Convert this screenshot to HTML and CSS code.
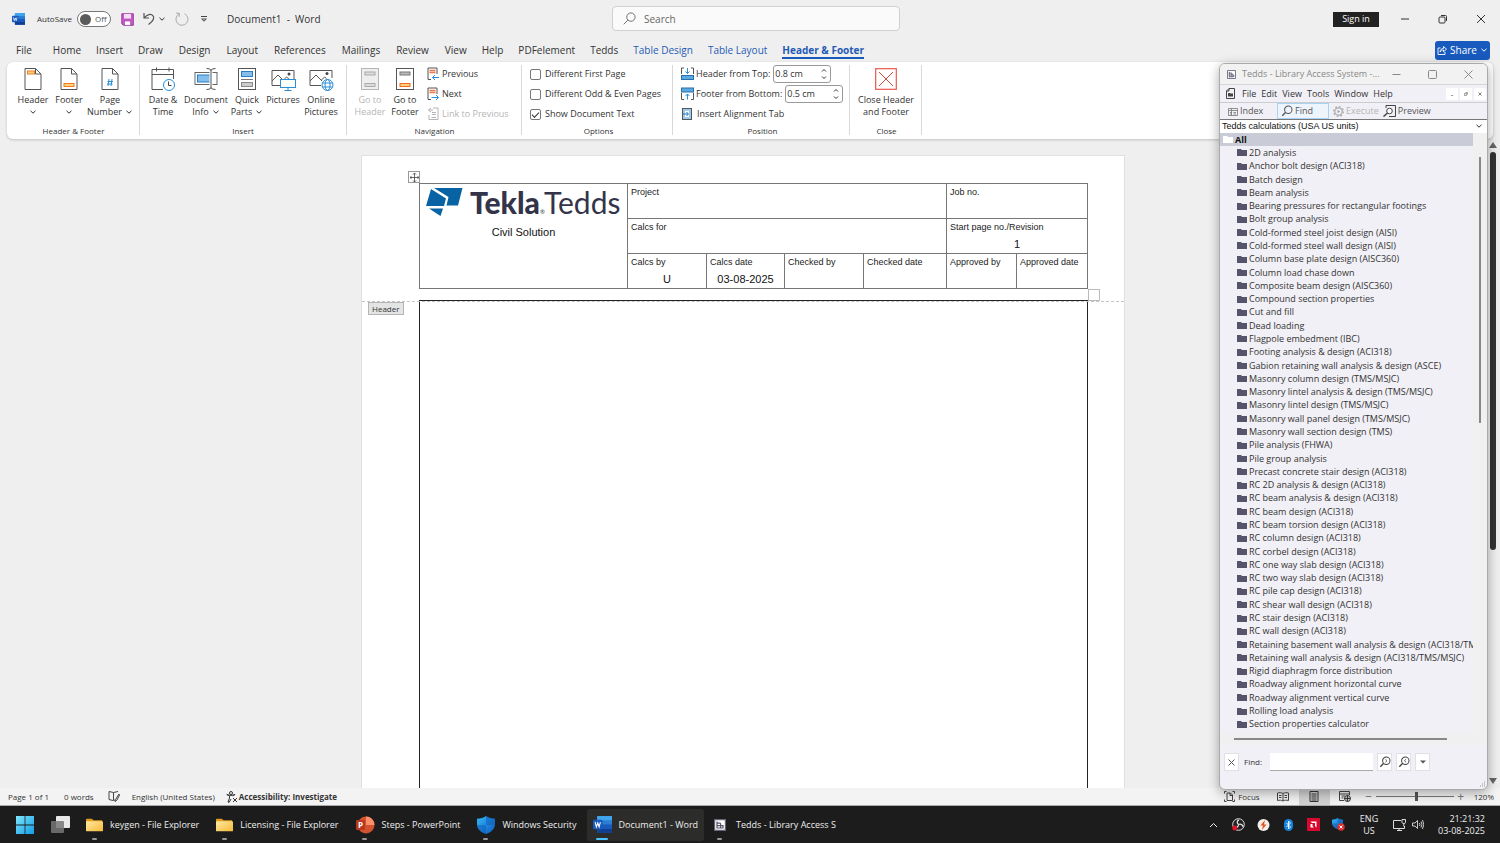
FILE: index.html
```html
<!DOCTYPE html>
<html lang="en">
<head>
<meta charset="utf-8">
<title>Document1 - Word</title>
<link rel="stylesheet" href="styles.css">
</head>
<body>
<svg class="defs" aria-hidden="true">
  <defs>
    <linearGradient id="shieldBlue" x1="0" y1="0" x2="1" y2="1"><stop offset="0" stop-color="#35b8f5"/><stop offset="1" stop-color="#0a5cc0"/></linearGradient>
    <linearGradient id="winBlue" x1="0" y1="0" x2="1" y2="1"><stop offset="0" stop-color="#7ee6fb"/><stop offset="1" stop-color="#129ce6"/></linearGradient>
    <linearGradient id="folderYellow" x1="0" y1="0" x2="1" y2="1"><stop offset="0" stop-color="#ffe9a0"/><stop offset="1" stop-color="#f5b93a"/></linearGradient>
  </defs>
  <symbol id="chev" viewBox="0 0 8 8"><path d="M1.5 2.8 4 5.2 6.5 2.8" fill="none" stroke="currentColor"/></symbol>
  <symbol id="word" viewBox="0 0 18 16"><rect x="4" y="0" width="14" height="16" rx="1" fill="#2b7cd3"/><path d="M4 0h14v4H4z" fill="#41a5ee"/><path d="M4 8h14v4H4z" fill="#185abd"/><path d="M4 12h14v4H4z" fill="#103f91"/><rect x="0" y="3.500" width="9" height="9" rx="1" fill="#185abd"/><path d="m2 5.800 1.200 4.500L4.500 6.500l1.300 3.800L7 5.800" fill="none" stroke="#fff"/></symbol>
  <symbol id="page" viewBox="0 0 18 24"><path d="M1 1.500h10.500L17 7v15.500H1z" fill="#fff" stroke="#555"/><path d="M11.500 1.500V7H17" fill="none" stroke="#555"/></symbol>
  <symbol id="folder" viewBox="0 0 10 9"><path d="M0 1h4l1 1h5v6H0z" fill="currentColor"/></symbol>
  <symbol id="explorer" viewBox="0 0 18 14"><path d="M1 0h5l2 2h9v3H0V1z" fill="#e09b1c"/><rect y="3" width="18" height="11" rx="1" fill="url(#folderYellow)"/></symbol>
  <symbol id="shield" viewBox="0 0 18 18"><path d="M9 0c2.500 2 5.500 2.700 9 2.700V8c0 5-4 8.300-9 10C4 16.300 0 13 0 8V2.700C3.500 2.700 6.500 2 9 0z" fill="url(#shieldBlue)"/><path d="M9 0v9H18V2.700C14.500 2.700 11.500 2 9 0zM9 9H0c.4 4.500 4.300 7.500 9 9z" fill="#0a55b5" opacity=".45"/></symbol>
  <symbol id="lens" viewBox="0 0 14 14"><circle cx="8.500" cy="5.500" r="4.300" fill="none" stroke="currentColor" stroke-width="1.200"/><path d="M5.500 8.500 1.500 12.500" stroke="currentColor" stroke-width="1.600"/></symbol>
  <symbol id="library" viewBox="0 0 10 10"><path d="M.5.5h9v9h-9z" fill="#fff" stroke="#66657a"/><path d="M2.500 2v6M2.500 3.500h3M2.500 5.500h5v2h-5M5.500 3.500v4" fill="none" stroke="#55546a"/></symbol>
</svg>

<main class="word">
  <header class="titlebar">
    <svg class="app-icon" width="13" height="12"><use href="#word"/></svg>
    <label class="autosave">AutoSave
      <button class="toggle" type="button" aria-pressed="false"><span class="knob"></span>Off</button>
    </label>
    <div class="quick">
      <button type="button" aria-label="Save"><svg width="13" height="13" viewBox="0 0 13 13"><path d="M.8.8h11.500v11.500H2.500L.8 10.800z" fill="#c45cc4" stroke="#a033a8"/><rect x="3" y="1" width="7" height="4.500" fill="#f6dff6"/><rect x="3.500" y="8" width="6" height="4.500" fill="#fff" stroke="#a033a8" stroke-width=".6"/></svg></button>
      <button type="button" aria-label="Undo" class="undo"><svg width="12" height="14" viewBox="0 0 12 14"><path d="M1 1v5h5M1.300 5.700C4 2.500 8 1.300 10 3.800c2 2.600.3 5-4.500 8.700" fill="none" stroke="#555" stroke-width="1.200"/></svg><svg width="8" height="8"><use href="#chev"/></svg></button>
      <button type="button" aria-label="Redo"><svg width="14" height="14" viewBox="0 0 14 14"><path d="M4 2A6 6 0 1 0 9.500 1.800M1 1.200h3.300v3.600" fill="none" stroke="#aaa"/></svg></button>
      <button type="button" aria-label="Customize toolbar"><svg width="8" height="8" viewBox="0 0 8 8"><path d="M1 1.500h6M1.700 4 4 6.200 6.300 4z" fill="none" stroke="#444"/></svg></button>
    </div>
    <h1 class="doc-title">Document1&nbsp; -&nbsp; Word</h1>
    <label class="search"><svg width="13" height="13" viewBox="0 0 14 14"><circle cx="8.500" cy="5.500" r="4.500" fill="none" stroke="#666"/><path d="M5.200 8.800.8 13.200" stroke="#666"/></svg><input type="search" placeholder="Search" aria-label="Search"></label>
    <button class="signin" type="button">Sign in</button>
    <div class="win-buttons">
      <button type="button" aria-label="Minimize"><svg width="10" height="10" viewBox="0 0 10 10"><path d="M1 5h8" stroke="#333"/></svg></button>
      <button type="button" aria-label="Restore"><svg width="10" height="10" viewBox="0 0 10 10"><rect x="1" y="3" width="6" height="6" rx="1" fill="none" stroke="#333"/><path d="M3 1.500h4.500q1 0 1 1V7" fill="none" stroke="#333"/></svg></button>
      <button type="button" aria-label="Close"><svg width="10" height="10" viewBox="0 0 10 10"><path d="m1 1 8 8M9 1 1 9" stroke="#333"/></svg></button>
    </div>
  </header>

  <nav class="tabs">
    <button type="button" class="file">File</button><button type="button">Home</button><button type="button">Insert</button><button type="button">Draw</button><button type="button">Design</button><button type="button">Layout</button><button type="button">References</button><button type="button">Mailings</button><button type="button">Review</button><button type="button">View</button><button type="button">Help</button><button type="button">PDFelement</button><button type="button">Tedds</button><button type="button" class="context">Table Design</button><button type="button" class="context">Table Layout</button><button type="button" class="context active">Header &amp; Footer</button>
    <button type="button" class="share"><svg width="10" height="10" viewBox="0 0 10 10"><path d="M3.500 3H1v6.500h7V7M3 7c.3-2.500 1.500-3.500 3.500-3.500V1.500L9.500 4.200l-3 2.600V5C5 5 4 5.500 3 7z" fill="none" stroke="#fff" stroke-width=".9"/></svg>Share<svg width="8" height="8"><use href="#chev"/></svg></button>
  </nav>

  <section class="ribbon">
    <div class="group g-hf">
      <div class="tools">
        <button type="button" class="big w36"><svg width="18" height="24" viewBox="0 0 18 24"><use href="#page"/><rect x="3.500" y="4" width="7" height="3" fill="#ffd27f" stroke="#ee7b1f"/></svg>Header<svg width="8" height="12" viewBox="0 0 8 8"><use href="#chev"/></svg></button>
        <button type="button" class="big w34"><svg width="18" height="24" viewBox="0 0 18 24"><use href="#page"/><rect x="4" y="16.500" width="10" height="3" fill="#ffd27f" stroke="#ee7b1f"/></svg>Footer<svg width="8" height="12" viewBox="0 0 8 8"><use href="#chev"/></svg></button>
        <button type="button" class="big w46"><svg width="18" height="24" viewBox="0 0 18 24"><use href="#page"/><path d="m8 12-1 7M11 12l-1 7M6.500 14.500H12M6 17h5.500" stroke="#2a8dd8" fill="none"/></svg>Page<span>Number <svg width="8" height="8"><use href="#chev"/></svg></span></button>
      </div>
      <h2>Header &amp; Footer</h2>
    </div>

    <div class="group g-insert">
      <div class="tools">
        <button type="button" class="big w36"><svg width="24" height="24" viewBox="0 0 24 24"><path d="M12 22.500H1v-20h21.500V12M1 7.500h21.500M5.500.5v4M18 .5v4" fill="none" stroke="#555"/><circle cx="18" cy="18" r="5.500" fill="#fff" stroke="#2a8dd8"/><path d="M17.500 14.500V18.500H20.500" fill="none" stroke="#444"/></svg>Date &amp;<span>Time</span></button>
        <button type="button" class="big w46"><svg width="24" height="24" viewBox="0 0 24 24"><rect x="1" y="5.500" width="22" height="12" fill="#fff" stroke="#666"/><rect x="3.500" y="8" width="14" height="7" fill="#83beec" stroke="#2a7fc4"/><path d="M17 2v20" stroke="#fff" stroke-width="3"/><path d="M12.500 1.500q4.500 0 4.500 2 0-2 4.500-2M12.500 22.500q4.500 0 4.500-2 0 2 4.500 2M17 3v18" fill="none" stroke="#555"/></svg>Document<span>Info <svg width="8" height="8"><use href="#chev"/></svg></span></button>
        <button type="button" class="big w32"><svg width="18" height="24" viewBox="0 0 18 24"><rect x=".5" y="1.500" width="17" height="21" fill="#fff" stroke="#555"/><rect x="3.500" y="4.500" width="11" height="5" fill="#83beec" stroke="#2a7fc4"/><path d="M3 12.500h12" stroke="#777"/><rect x="3.500" y="15.500" width="11" height="4" fill="#ccc" stroke="#888"/></svg>Quick<span>Parts <svg width="8" height="8"><use href="#chev"/></svg></span></button>
        <button type="button" class="big w36"><svg width="25" height="24" viewBox="0 0 25 24"><path d="M9 18.500H1v-15h22V12M1 14l6-6 6 6M12.500 13l3-3 3 2.500" fill="none" stroke="#555"/><circle cx="18" cy="7" r="1.500" fill="#444"/><rect x="9.500" y="12.500" width="15" height="8" fill="#fff" stroke="#2a8dd8"/><path d="M17 20.500v3M13.500 23.500h7" stroke="#2a8dd8"/></svg>Pictures</button>
        <button type="button" class="big w36"><svg width="25" height="24" viewBox="0 0 25 24"><path d="M12 18.500H1v-15h22V11M1 14l6-6 6 6M12.500 13l3-3 2 1.500" fill="none" stroke="#555"/><circle cx="18" cy="6.500" r="1.500" fill="#444"/><circle cx="18.500" cy="18" r="5.500" fill="#fff" stroke="#2a8dd8"/><ellipse cx="18.500" cy="18" rx="2.500" ry="5.500" fill="none" stroke="#2a8dd8"/><path d="M13.500 16h10M13.500 20h10" stroke="#2a8dd8"/></svg>Online<span>Pictures</span></button>
      </div>
      <h2>Insert</h2>
    </div>

    <div class="group g-nav">
      <div class="tools">
        <button type="button" class="big w34" disabled><svg width="18" height="24" viewBox="0 0 18 24"><rect x=".5" y="1.500" width="17" height="21" fill="#eee" stroke="#b5b5b5"/><rect x="4" y="5" width="10" height="3" fill="#ddd" stroke="#aaa"/><rect x="4" y="16.500" width="10" height="3" fill="#ddd" stroke="#aaa"/></svg>Go to<span>Header</span></button>
        <button type="button" class="big w34"><svg width="18" height="24" viewBox="0 0 18 24"><rect x=".5" y="1.500" width="17" height="21" fill="#fff" stroke="#555"/><rect x="4" y="5" width="10" height="3" fill="#bbb" stroke="#777"/><rect x="4" y="16.500" width="10" height="3" fill="#ffd27f" stroke="#ee6b1f"/></svg>Go to<span>Footer</span></button>
        <div class="rows">
          <button type="button" class="small"><svg width="12" height="14" viewBox="0 0 12 14"><path d="M4 12.500H1V1h9v6" fill="none" stroke="#555"/><path d="M2.500 3.500h6M2.500 5.500h6" stroke="#ee7b4f" stroke-width="1.500"/><path d="M12 10.500H5.500M8 8l-2.500 2.500L8 13" fill="none" stroke="#2a8dd8"/></svg>Previous</button>
          <button type="button" class="small"><svg width="12" height="14" viewBox="0 0 12 14"><path d="M4 12.500H1V1h9v6" fill="none" stroke="#555"/><path d="M2.500 3.500h6M2.500 5.500h6" stroke="#ee7b4f" stroke-width="1.500"/><path d="M4.500 10.500h7M9 8l2.500 2.500L9 13" fill="none" stroke="#2a8dd8"/></svg>Next</button>
          <button type="button" class="small" disabled><svg width="12" height="14" viewBox="0 0 12 14"><path d="M6 1h5v11.500H2V8M5 5.500h4M5 7.500h4M4.500 10.500h4.500M4 1 1.500 3 4 5M1.500 3H6" fill="none" stroke="#b5b5b5"/></svg>Link to Previous</button>
        </div>
      </div>
      <h2>Navigation</h2>
    </div>

    <div class="group g-options">
      <div class="rows">
        <label class="check"><input type="checkbox">Different First Page</label>
        <label class="check"><input type="checkbox">Different Odd &amp; Even Pages</label>
        <label class="check"><input type="checkbox" checked>Show Document Text</label>
      </div>
      <h2>Options</h2>
    </div>

    <div class="group g-position">
      <div class="rows">
        <label class="spin"><svg width="13" height="14" viewBox="0 0 13 14"><path d="M3 1H.5v6M10 1h2.500v6" fill="none" stroke="#555"/><path d="M6.500 1v5.500M4.500 4.500l2 2 2-2" fill="none" stroke="#2a8dd8"/><rect x=".5" y="8.500" width="12" height="4" fill="#5aa9e0" stroke="#2a6fae"/></svg>Header from Top:<span class="box"><input type="text" value="0.8 cm"><svg width="8" height="14" viewBox="0 0 8 14"><path d="m2 4.500 2-2 2 2M2 9.500l2 2 2-2" fill="none" stroke="#333"/></svg></span></label>
        <label class="spin"><svg width="13" height="14" viewBox="0 0 13 14"><rect x=".5" y="1" width="12" height="4" fill="#5aa9e0" stroke="#2a6fae"/><path d="M.5 6v6.500H3M12.500 6v6.500H10" fill="none" stroke="#555"/><path d="M6.500 12.500V7M4.500 9l2-2 2 2" fill="none" stroke="#2a8dd8"/></svg>Footer from Bottom:<span class="box"><input type="text" value="0.5 cm"><svg width="8" height="14" viewBox="0 0 8 14"><path d="m2 4.500 2-2 2 2M2 9.500l2 2 2-2" fill="none" stroke="#333"/></svg></span></label>
        <button type="button" class="small tab-tool"><svg width="12" height="14" viewBox="0 0 12 14"><rect x="1.500" y="1.500" width="9" height="11" fill="#9bcbee" stroke="#555"/><rect x="4" y="4" width="4" height="6" fill="#fff"/><path d="M2 7h5M5.500 5l2 2-2 2" fill="none" stroke="#1f6fb5"/></svg>Insert Alignment Tab</button>
      </div>
      <h2>Position</h2>
    </div>

    <div class="group g-close">
      <div class="tools">
        <button type="button" class="big w62"><svg width="22" height="24" viewBox="0 0 22 24"><rect x=".7" y="1.700" width="20.600" height="20.600" fill="#fff" stroke="#e8584f" stroke-width="1.200"/><path d="m4 5 14 14M18 5 4 19" stroke="#d8483a"/></svg>Close Header<span>and Footer</span></button>
      </div>
      <h2>Close</h2>
    </div>
  </section>

  <section class="workspace">
    <div class="canvas">
      <article class="sheet">
        <span class="move"><svg width="9" height="9" viewBox="0 0 9 9"><path d="M4.500 0v9M0 4.500h9M3 1.500 4.500 0 6 1.500M3 7.500 4.500 9 6 7.500M1.500 3 0 4.500 1.500 6M7.500 3 9 4.500 7.500 6" fill="none" stroke="#444" stroke-width=".8"/></svg></span>
        <table class="calc">
          <colgroup><col class="c1"><col class="c2"><col class="c3"><col class="c4"><col class="c5"><col class="c6"><col class="c7"></colgroup>
          <tr>
            <td rowspan="3" class="brand-cell"><div class="brand"><svg width="37" height="28" viewBox="0 0 37 28"><path d="M5 1 20 10.500 18 18H0zM8 0h28.500L32 17.500H20.500L22.500 9zM3 20.500h14L14.500 28z" fill="#0763a3"/></svg><b>Tekla</b><sub>®</sub><i>Tedds</i></div><p>Civil Solution</p></td>
            <td colspan="4">Project</td><td colspan="2">Job no.</td>
          </tr>
          <tr><td colspan="4">Calcs for</td><td colspan="2">Start page no./Revision<p>1</p></td></tr>
          <tr><td>Calcs by<p>U</p></td><td>Calcs date<p>03-08-2025</p></td><td>Checked by</td><td>Checked date</td><td>Approved by</td><td>Approved date</td></tr>
        </table>
        <span class="resize"></span>
        <span class="tag">Header</span>
        <div class="frame"></div>
      </article>
    </div>
    <div class="vscroll"><span class="up"></span><span class="thumb"></span><span class="down"></span></div>
  </section>

  <footer class="status">
    <span class="pages">Page 1 of 1</span><span class="words">0 words</span>
    <svg class="proof" width="12" height="11" viewBox="0 0 12 11"><path d="M5 9.500 1 8.500v-8l4.500 1L10 .5M5.500 1.500v8M5.500 9.500l1.500-.5M11 3 7.500 8.500 7 10.500l2-1.500L11.500 4z" fill="none" stroke="#444"/></svg>
    <span class="lang">English (United States)</span>
    <svg width="12" height="12" viewBox="0 0 12 12"><circle cx="5" cy="2" r="1.500" fill="none" stroke="#333"/><path d="M.8 3.500 3.500 5v2L2 11l1 .5L5 8M9 3.500 6.500 4.800M7 7l4 4M11 7l-4 4M.8 3.500 5 4.500 9.200 3.500" fill="none" stroke="#333"/></svg>
    <b>Accessibility: Investigate</b>
    <div class="view">
      <button type="button" class="focus"><svg width="11" height="11" viewBox="0 0 11 11"><path d="M2.500.5h-2v2M8.500.5h2v2M2.500 10.500h-2v-2M8.500 10.500h2v-2M3 2h3.500l2 2v5.500H3zM6 2v2.500h2.500" fill="none" stroke="#444"/></svg>Focus</button>
      <button type="button" class="mode" aria-label="Read mode"><svg width="12" height="10" viewBox="0 0 12 10"><path d="M6 1.500C4.500.5 2 .5.500 1v7.500c2-.5 4-.5 5.500.5 1.500-1 3.500-1 5.500-.5V1C10 .5 7.500.5 6 1.500zM6 1.500V9M2 3.500h2.500M2 5.500h2.500M7.500 3.500H10M7.500 5.500H10" fill="none" stroke="#444"/></svg></button>
      <button type="button" class="mode on" aria-label="Print layout"><svg width="10" height="11" viewBox="0 0 10 11"><path d="M1 .5h8v10H1zM2.500 3h5M2.500 5h5M2.500 7h5M2.500 9h5" fill="none" stroke="#333"/></svg></button>
      <button type="button" class="mode" aria-label="Web layout"><svg width="12" height="11" viewBox="0 0 12 11"><path d="M5 9.500H.5v-9h10V4M.5 3h10M2.500 5H6M2.500 7h2" fill="none" stroke="#444"/><circle cx="8.500" cy="7.500" r="3" fill="#ccc" stroke="#333"/><path d="M5.500 7.500h6M8.500 4.500v6" stroke="#333"/></svg></button>
      <span class="sign">−</span><input type="range" min="0" max="100" value="52" aria-label="Zoom"><span class="sign">+</span><span class="pct">120%</span>
    </div>
  </footer>
</main>

<aside class="tedds">
  <header class="t-title"><svg width="9" height="9" viewBox="0 0 10 10"><use href="#library"/></svg><span>Tedds - Library Access System -...</span>
    <button type="button" aria-label="Minimize"><svg width="9" height="9" viewBox="0 0 9 9"><path d="M.5 4.500h8" stroke="#888"/></svg></button>
    <button type="button" aria-label="Maximize"><svg width="9" height="9" viewBox="0 0 9 9"><rect x=".5" y=".5" width="8" height="8" rx="1" fill="none" stroke="#888"/></svg></button>
    <button type="button" aria-label="Close"><svg width="9" height="9" viewBox="0 0 9 9"><path d="m.5.5 8 8M8.500.5l-8 8" stroke="#888"/></svg></button>
  </header>
  <nav class="t-menu"><svg width="9" height="11" viewBox="0 0 9 11"><path d="M3 .5h5.500v10h-8V3zM3 .5V3H.5" fill="none" stroke="#444"/><path d="M2 5h2l.5.500H7V8.500H2z" fill="#444"/></svg>
    <button type="button">File</button><button type="button">Edit</button><button type="button">View</button><button type="button">Tools</button><button type="button">Window</button><button type="button">Help</button>
    <span class="mdi"><button type="button" aria-label="Minimize child">-</button><button type="button" aria-label="Restore child"><svg width="4" height="4" viewBox="0 0 4 4"><path d="M.5 1.500h2v2h-2zM1.500.5h2v2" fill="none" stroke="#666" stroke-width=".6"/></svg></button><button type="button" aria-label="Close child"><svg width="4" height="4" viewBox="0 0 4 4"><path d="m.5.5 3 3M3.500.5l-3 3" stroke="#666" stroke-width=".8"/></svg></button></span>
  </nav>
  <div class="t-tools">
    <button type="button" class="t-index"><svg width="10" height="9" viewBox="0 0 10 9"><path d="M.5 1.500h9v7h-9zM.5 3.500h9M2 5.500h2M5.500 5.500H8M2 7h2M5.500 7H8M3.500 1.500v7" fill="none" stroke="#777" stroke-width=".8"/></svg>Index</button>
    <button type="button" class="t-find"><svg width="12" height="12" viewBox="0 0 14 14"><use href="#lens"/></svg>Find</button>
    <button type="button" disabled><svg width="11" height="11" viewBox="0 0 11 11"><circle cx="5.500" cy="5.500" r="3.700" fill="none" stroke="#aaa" stroke-width="1.200"/><circle cx="5.500" cy="5.500" r="4.900" fill="none" stroke="#aaa" stroke-width="1.200" stroke-dasharray="1.900 1.900"/><path d="M4.500 3.800v3.400l2.800-1.700z" fill="#aaa"/></svg>Execute</button>
    <button type="button"><svg width="13" height="12" viewBox="0 0 13 12"><path d="M3 3V.5h9.500v11H6" fill="none" stroke="#444"/><circle cx="6.500" cy="6" r="2.800" fill="#fff" stroke="#444"/><path d="m4.500 8-4 3.500" stroke="#444" stroke-width="1.500"/></svg>Preview</button>
  </div>
  <div class="t-select"><select aria-label="Library set"><option>Tedds calculations (USA US units)</option></select><svg width="8" height="8"><use href="#chev"/></svg></div>
  <div class="t-body">
    <div class="tree">
      <ul>
        <li class="all"><svg width="10" height="9"><use href="#folder"/></svg>All</li>
        <li><svg width="10" height="9"><use href="#folder"/></svg>2D analysis</li>
        <li><svg width="10" height="9"><use href="#folder"/></svg>Anchor bolt design (ACI318)</li>
        <li><svg width="10" height="9"><use href="#folder"/></svg>Batch design</li>
        <li><svg width="10" height="9"><use href="#folder"/></svg>Beam analysis</li>
        <li><svg width="10" height="9"><use href="#folder"/></svg>Bearing pressures for rectangular footings</li>
        <li><svg width="10" height="9"><use href="#folder"/></svg>Bolt group analysis</li>
        <li><svg width="10" height="9"><use href="#folder"/></svg>Cold-formed steel joist design (AISI)</li>
        <li><svg width="10" height="9"><use href="#folder"/></svg>Cold-formed steel wall design (AISI)</li>
        <li><svg width="10" height="9"><use href="#folder"/></svg>Column base plate design (AISC360)</li>
        <li><svg width="10" height="9"><use href="#folder"/></svg>Column load chase down</li>
        <li><svg width="10" height="9"><use href="#folder"/></svg>Composite beam design (AISC360)</li>
        <li><svg width="10" height="9"><use href="#folder"/></svg>Compound section properties</li>
        <li><svg width="10" height="9"><use href="#folder"/></svg>Cut and fill</li>
        <li><svg width="10" height="9"><use href="#folder"/></svg>Dead loading</li>
        <li><svg width="10" height="9"><use href="#folder"/></svg>Flagpole embedment (IBC)</li>
        <li><svg width="10" height="9"><use href="#folder"/></svg>Footing analysis &amp; design (ACI318)</li>
        <li><svg width="10" height="9"><use href="#folder"/></svg>Gabion retaining wall analysis &amp; design (ASCE)</li>
        <li><svg width="10" height="9"><use href="#folder"/></svg>Masonry column design (TMS/MSJC)</li>
        <li><svg width="10" height="9"><use href="#folder"/></svg>Masonry lintel analysis &amp; design (TMS/MSJC)</li>
        <li><svg width="10" height="9"><use href="#folder"/></svg>Masonry lintel design (TMS/MSJC)</li>
        <li><svg width="10" height="9"><use href="#folder"/></svg>Masonry wall panel design (TMS/MSJC)</li>
        <li><svg width="10" height="9"><use href="#folder"/></svg>Masonry wall section design (TMS)</li>
        <li><svg width="10" height="9"><use href="#folder"/></svg>Pile analysis (FHWA)</li>
        <li><svg width="10" height="9"><use href="#folder"/></svg>Pile group analysis</li>
        <li><svg width="10" height="9"><use href="#folder"/></svg>Precast concrete stair design (ACI318)</li>
        <li><svg width="10" height="9"><use href="#folder"/></svg>RC 2D analysis &amp; design (ACI318)</li>
        <li><svg width="10" height="9"><use href="#folder"/></svg>RC beam analysis &amp; design (ACI318)</li>
        <li><svg width="10" height="9"><use href="#folder"/></svg>RC beam design (ACI318)</li>
        <li><svg width="10" height="9"><use href="#folder"/></svg>RC beam torsion design (ACI318)</li>
        <li><svg width="10" height="9"><use href="#folder"/></svg>RC column design (ACI318)</li>
        <li><svg width="10" height="9"><use href="#folder"/></svg>RC corbel design (ACI318)</li>
        <li><svg width="10" height="9"><use href="#folder"/></svg>RC one way slab design (ACI318)</li>
        <li><svg width="10" height="9"><use href="#folder"/></svg>RC two way slab design (ACI318)</li>
        <li><svg width="10" height="9"><use href="#folder"/></svg>RC pile cap design (ACI318)</li>
        <li><svg width="10" height="9"><use href="#folder"/></svg>RC shear wall design (ACI318)</li>
        <li><svg width="10" height="9"><use href="#folder"/></svg>RC stair design (ACI318)</li>
        <li><svg width="10" height="9"><use href="#folder"/></svg>RC wall design (ACI318)</li>
        <li><svg width="10" height="9"><use href="#folder"/></svg>Retaining basement wall analysis &amp; design (ACI318/TMS/MSJC)</li>
        <li><svg width="10" height="9"><use href="#folder"/></svg>Retaining wall analysis &amp; design (ACI318/TMS/MSJC)</li>
        <li><svg width="10" height="9"><use href="#folder"/></svg>Rigid diaphragm force distribution</li>
        <li><svg width="10" height="9"><use href="#folder"/></svg>Roadway alignment horizontal curve</li>
        <li><svg width="10" height="9"><use href="#folder"/></svg>Roadway alignment vertical curve</li>
        <li><svg width="10" height="9"><use href="#folder"/></svg>Rolling load analysis</li>
        <li><svg width="10" height="9"><use href="#folder"/></svg>Section properties calculator</li>
      </ul>
    </div>
    <div class="t-vbar"><span></span></div>
  </div>
  <div class="t-hbar"><span></span></div>
  <div class="finder">
    <button type="button" class="sq" aria-label="Close find"><svg width="7" height="7" viewBox="0 0 7 7"><path d="m.5.5 6 6M6.500.5l-6 6" stroke="#555"/></svg></button>
    <label for="find">Find:</label><input id="find" type="text">
    <button type="button" class="sq" aria-label="Find next"><svg width="12" height="12" viewBox="0 0 14 14"><use href="#lens"/><path d="m7.500 3.800 1.800 1.700-1.800 1.700" fill="none" stroke="#444"/></svg></button>
    <button type="button" class="sq" aria-label="Find previous"><svg width="12" height="12" viewBox="0 0 14 14"><use href="#lens"/><path d="M9.300 3.800 7.500 5.500l1.800 1.700" fill="none" stroke="#444"/></svg></button>
    <button type="button" class="sq" aria-label="Find options"><svg width="6" height="4" viewBox="0 0 6 4"><path d="M0 .5h6l-3 3z" fill="#555"/></svg></button>
  </div>
  <svg class="grip" width="7" height="7" viewBox="0 0 7 7"><path d="M5 1h1M5 3h1M3 3h1M5 5h1M3 5h1M1 5h1" stroke="#999"/></svg>
</aside>

<footer class="taskbar">
  <button type="button" class="start" aria-label="Start"><svg width="18" height="18" viewBox="0 0 18 18"><path d="M0 0h8.600v8.600H0zM9.400 0H18v8.600H9.400zM0 9.400h8.600V18H0zM9.400 9.400H18V18H9.400z" fill="url(#winBlue)"/></svg></button>
  <button type="button" class="start views" aria-label="Task view"><svg width="19" height="17" viewBox="0 0 19 17"><rect x="5" width="14" height="12" rx="1" fill="#e8e8e8"/><rect y="5" width="13" height="12" rx="1" fill="#777" opacity=".85"/></svg></button>
  <button type="button" class="task"><svg width="17" height="14" viewBox="0 0 18 14"><use href="#explorer"/></svg>keygen - File Explorer</button>
  <button type="button" class="task"><svg width="17" height="14" viewBox="0 0 18 14"><use href="#explorer"/></svg>Licensing - File Explorer</button>
  <button type="button" class="task"><svg width="19" height="18" viewBox="0 0 19 18"><circle cx="10" cy="9" r="8.500" fill="#d35230"/><path d="M10 .5A8.500 8.500 0 0 1 18.500 9H10z" fill="#ff8f6b"/><rect y="4" width="9" height="10" rx="1" fill="#b7381c"/><text x="4.500" y="12" text-anchor="middle" font-family="Open Sans, sans-serif" font-weight="700" font-size="8" fill="#fff">P</text></svg>Steps - PowerPoint</button>
  <button type="button" class="task"><svg width="18" height="18"><use href="#shield"/></svg>Windows Security</button>
  <button type="button" class="task active"><svg width="19" height="17" viewBox="0 0 18 16"><use href="#word"/></svg>Document1 - Word</button>
  <button type="button" class="task last"><svg width="12" height="12" viewBox="0 0 10 10"><use href="#library"/></svg>Tedds - Library Access S</button>
  <div class="tray">
    <svg height="6" viewBox="0 0 8 6"><path d="M.5 5 4 1.500 7.500 5" fill="none" stroke="#eee"/></svg>
    <svg height="13" viewBox="0 0 13 13"><circle cx="6.500" cy="6.500" r="5.800" fill="#222" stroke="#ddd"/><path d="M6.500 6.500C4.500 5 5 2.500 7 2M6.500 6.500c2.500-1 4.500.5 4.500 2.500M6.500 6.500c0 2.500-2 3.500-4 3" fill="none" stroke="#ddd" stroke-width="1.300"/><circle cx="2.800" cy="10" r="2.500" fill="#e2122a"/></svg>
    <svg height="12" viewBox="0 0 12 12"><circle cx="6" cy="6" r="6" fill="#f3eee9"/><path d="M7.500 1 3 6.500h2.500L4.500 11 9 5.500H6.500z" fill="#e0521c"/></svg>
    <svg height="12" viewBox="0 0 9 12"><rect width="9" height="12" rx="4.500" fill="#1583dd"/><path d="m2.500 4 4 4-2 2V2l2 2-4 4" fill="none" stroke="#fff" stroke-width=".9"/></svg>
    <svg height="13" viewBox="0 0 13 13"><rect width="13" height="13" fill="#d8092c"/><path d="M3.500 3.500h6v6L8 8V5H5zM3.500 6v3.500H7L5.500 8V6z" fill="#fff"/></svg>
    <svg height="13" viewBox="0 0 13 13"><svg width="11" height="11" viewBox="0 0 18 18"><use href="#shield"/></svg><circle cx="9" cy="9" r="3.800" fill="#d4302c"/><path d="m7.500 7.500 3 3M10.500 7.500l-3 3" stroke="#fff"/></svg>
    <span class="kbd">ENG<br>US</span>
    <svg height="12" viewBox="0 0 13 12"><path d="M8 1.500H.5v8h11V7M4 11.500h5M6 9.500v2M9 .5h3.500v3q0 1-1.700 1T9 3.500zM10.800 4.500v3" fill="none" stroke="#ddd"/></svg>
    <svg class="sound" height="11" viewBox="0 0 12 11"><path d="M.5 4v3H3l2.500 2.500v-8L3 4zM7.500 4q1 1.500 0 3M9 2.500q2 3 0 6M10.500 1q2.500 4.500 0 9" fill="none" stroke="#ddd" stroke-width=".9"/></svg>
    <time>21:21:32<br>03-08-2025</time>
  </div>
</footer>
</body>
</html>
```
FILE: styles.css
```css
* { box-sizing: border-box; }
body {
  margin: 0;
  height: 100vh;
  display: flex;
  flex-direction: column;
  overflow: hidden;
  position: relative;
  font: 10px/12px "Open Sans", "Noto Sans", sans-serif;
  color: #333;
  background: #efefef;
}
button, input, select {
  font: inherit;
  color: inherit;
  margin: 0;
  padding: 0;
  border: 0;
  background: none;
  white-space: nowrap;
}
h1, h2, p, ul { margin: 0; padding: 0; font-size: inherit; font-weight: 400; }
svg { flex: none; }
.defs { position: absolute; width: 0; height: 0; }

.word { flex: 1; min-height: 0; display: flex; flex-direction: column; }

/* title bar */
.titlebar { position: relative; display: flex; align-items: center; height: 38px; padding: 0 14px 0 12px; flex: none; }
.autosave { display: flex; align-items: center; gap: 5px; margin-left: 12px; font-size: 8px; }
.toggle { display: flex; align-items: center; gap: 4px; width: 34px; height: 16px; padding-left: 2px; border: 1px solid #777; border-radius: 8px; background: #fff; color: #555; font-size: 8px; }
.knob { width: 11px; height: 11px; border-radius: 50%; background: #5a5a5a; }
.quick { display: flex; align-items: center; gap: 9px; margin-left: 10px; }
.quick button { display: flex; align-items: center; }
.undo { gap: 3px; }
.quick button:last-child { margin-left: 2px; }
.doc-title { margin-left: 19px; }
.search { position: absolute; left: 50%; top: 6px; width: 288px; height: 25px; margin-left: -138px; display: flex; align-items: center; gap: 8px; padding-left: 10px; background: #fafafa; border: 1px solid #d0d0d0; border-radius: 4px; }
.search input { flex: 1; outline: 0; }
.search input::placeholder { color: #666; opacity: 1; }
.signin { margin-left: auto; width: 46px; height: 15px; background: #222; color: #fff; font-size: 9px; }
.win-buttons { display: flex; gap: 28px; margin-left: 21px; }
.win-buttons button { display: flex; }

/* tabs */
.tabs { display: flex; align-items: center; gap: 15px; height: 24px; padding: 0 10px 0 16px; flex: none; }
.tabs button { height: 18px; }
.tabs .file { margin-right: 6px; }
.tabs button:nth-child(n+4):nth-child(-n+9) { margin-right: 1px; }
.tabs .context { color: #1f5bb5; }
.tabs .active { font-weight: 700; border-bottom: 2px solid #185abd; padding-top: 2px; }
.tabs .share { display: flex; align-items: center; justify-content: center; gap: 3px; width: 55px; height: 19px; margin-left: auto; border-radius: 3px; background: #185abd; color: #fff; }

/* ribbon */
.ribbon { display: flex; flex: none; height: 77px; margin: 0 7px; background: #fff; border-radius: 6px; box-shadow: 0 1px 3px #0003; }
.group { display: flex; flex-direction: column; justify-content: space-between; position: relative; padding: 2px 0 2px; }
.group::after { content: ""; position: absolute; right: 0; top: 3px; bottom: 4px; width: 1px; background: #d8d8d8; }
.group h2 { font-size: 8px; text-align: center; }
.g-hf { width: 133px; padding-left: 8px; }
.g-hf h2 { margin-left: -8px; }
.g-insert { width: 207px; padding-left: 5px; }
.g-insert h2, .g-nav h2, .g-options h2, .g-position h2 { margin-left: -6px; }
.g-nav { width: 175px; padding-left: 6px; }
.g-options { width: 151px; padding-left: 8px; }
.g-position { width: 177px; padding-left: 8px; }
.g-close { width: 72px; padding-left: 5px; }
.g-close h2 { margin-left: -4px; }
.tools { display: flex; gap: 1px; align-items: flex-start; }
.g-insert .tools { gap: 2px; }
.big { display: flex; flex-direction: column; align-items: center; padding-top: 3px; font-size: 9px; }
.big > svg:first-child { margin-bottom: 3px; }
.big span { display: flex; align-items: center; gap: 3px; }
.w32 { width: 32px; }
.w34 { width: 34px; }
.w36 { width: 36px; }
.w46 { width: 46px; }
.w62 { width: 62px; }
button:disabled { color: #b5b5b5; }
.rows { display: flex; flex-direction: column; font-size: 9px; }
.g-nav .rows { margin-left: 4px; }
.small, .check, .spin { display: flex; align-items: center; height: 20px; gap: 3px; white-space: nowrap; }
.check { gap: 4px; }
.check input { appearance: none; width: 11px; height: 11px; border: 1px solid #777; border-radius: 2px; background: #fff; }
.check input:checked::before { content: ""; display: block; width: 6px; height: 3px; margin: 2px 0 0 1px; border: solid #333; border-width: 0 0 1px 1px; transform: rotate(-45deg); }
.spin { gap: 2px; }
.box { display: flex; align-items: center; width: 58px; height: 18px; margin-left: 1px; padding: 0 2px 0 1px; border: 1px solid #999; border-radius: 3px; }
.box input { flex: 1; min-width: 0; outline: 0; }
.tab-tool { gap: 4px; }

/* document area */
.workspace { flex: 1; min-height: 0; display: flex; }
.canvas { flex: 1; display: flex; justify-content: center; padding-top: 16px; overflow: hidden; }
.sheet { position: relative; display: flex; flex-direction: column; width: 764px; padding: 27px 36px 0 57px; background: #fff; border: solid #e0e0e0; border-width: 1px 1px 0; }
.move { position: absolute; left: 46px; top: 15px; width: 12px; height: 12px; display: grid; place-items: center; border: 1px solid #999; }
.calc { table-layout: fixed; width: 100%; border-collapse: collapse; font: 9px/12px "Liberation Sans", Arial, sans-serif; color: #222; }
.calc td { height: 35px; padding: 2px 3px 0; vertical-align: top; border: 1px solid #777; }
.calc p { margin-top: 5px; font-size: 11px; text-align: center; color: #111; }
.calc .brand-cell p { margin-top: 8px; }
.c1 { width: 208px; }
.c2 { width: 79px; }
.c3 { width: 78px; }
.c4 { width: 79px; }
.c5 { width: 83px; }
.c6 { width: 70px; }
.brand { display: flex; align-items: center; height: 32px; padding-left: 3px; font: 30px/32px Lato, sans-serif; color: #33344a; }
.brand b { font-weight: 900; margin-left: 7px; }
.brand i { font-style: normal; font-weight: 400; font-size: 30px; margin-left: -1px; }
.brand sub { font-size: 6px; align-self: flex-end; line-height: 12px; }
.resize { position: absolute; right: 24px; top: 133px; width: 12px; height: 12px; border: 1px solid #bbb; }
.tag { position: absolute; left: 6px; top: 146px; padding: 0 3px; font-size: 8px; line-height: 11px; background: #e4e4e4; border: 1px solid #b5b5b5; }
.sheet::after { content: ""; position: absolute; left: 0; right: 0; top: 145px; border-top: 1px dashed #c4c4c4; }
.frame { flex: 1; margin-top: 11px; border: solid #222; border-width: 1px 1px 0; }
.vscroll { width: 14px; padding: 3px 3px 4px; display: flex; flex-direction: column; align-items: center; gap: 4px; }
.vscroll .up { border: 4px solid transparent; border-top: 0; border-bottom: 6px solid #666; }
.vscroll .thumb { width: 6px; height: 62%; border-radius: 3px; background: #333; }
.vscroll .down { margin-top: auto; border: 4px solid transparent; border-bottom: 0; border-top: 6px solid #666; }

/* status bar */
.status { display: flex; align-items: center; flex: none; height: 18px; padding: 0 6px 0 8px; background: #f3f3f3; font-size: 8px; border-bottom: 1px solid #aaa; }
.words { margin-left: 15px; }
.proof { margin: 0 12px 0 14px; }
.lang { margin-right: 11px; }
.status b { margin-left: 1px; }
.view { display: flex; align-items: center; margin-left: auto; height: 100%; }
.focus { display: flex; align-items: center; gap: 3px; margin-right: 8px; }
.mode { width: 31px; height: 100%; display: grid; place-items: center; }
.mode.on { background: #d2d2d2; }
.sign { width: 10px; text-align: center; font-size: 12px; color: #777; }
.view .mode + .sign { margin-left: 3px; }
.view input { appearance: none; width: 78px; height: 10px; margin: 0 2px; background: linear-gradient(#777, #777) center / 100% 1px no-repeat; }
.view input::-webkit-slider-thumb { appearance: none; width: 3px; height: 9px; background: #555; }
.pct { margin-left: 8px; }

/* library window */
.tedds { position: absolute; z-index: 2; right: 12px; top: 63px; bottom: 53px; width: 269px; display: flex; flex-direction: column; background: #f1f0f6; border: 1px solid #aaa; border-radius: 6px; box-shadow: 0 3px 12px #0005; overflow: hidden; }
.t-title { display: flex; align-items: center; height: 21px; padding: 0 14px 0 7px; background: #f2f2f2; color: #888; font-size: 9px; border-bottom: 1px solid #d5d5d5; flex: none; }
.t-title span { margin-left: 6px; margin-right: auto; white-space: nowrap; }
.t-title button { display: flex; margin-left: 27px; }
.t-title span + button { margin-left: 0; }
.t-menu { display: flex; align-items: center; height: 17px; padding: 0 1px 0 6px; gap: 6px; font-size: 9px; flex: none; }
.t-menu > button { margin-right: -1px; }
.t-menu > svg { margin-right: 1px; }
.mdi { display: flex; gap: 2px; margin-left: auto; font-size: 8px; }
.mdi button { width: 12px; height: 12px; background: #fff; display: grid; place-items: center; }
.t-tools { display: flex; align-items: center; height: 17px; padding-left: 6px; font-size: 9px; color: #555; border-top: 1px solid #ccc; flex: none; }
.t-tools button { display: flex; align-items: center; gap: 2px; height: 16px; margin-right: 4px; }
.t-tools .t-index { width: 47px; padding-left: 2px; }
.t-tools .t-find { width: 52px; padding-left: 3px; border: 1px solid #a9d3f2; background: #eef4fc; }
.t-select { display: flex; align-items: center; height: 14px; padding: 0 4px 2px 2px; background: #fff; border-top: 1px solid #777; flex: none; }
.t-select select { appearance: none; flex: 1; font: 9px/12px "Liberation Sans", Arial, sans-serif; color: #111; }
.t-body { flex: 1; min-height: 0; display: flex; background: #f0f0f0; }
.tree { flex: 1; min-width: 0; display: flex; overflow: hidden; background: #f1f0f6; padding-bottom: 2px; }
.tree ul { flex: 1; min-width: 0; display: grid; grid-auto-rows: minmax(0, 1fr); list-style: none; font-size: 9px; }
.tree li { display: flex; align-items: center; gap: 2px; padding-left: 17px; white-space: nowrap; min-width: 0; overflow: hidden; }
.tree li svg { color: #55546a; }
.tree .all { padding-left: 3px; background: #c9ccd6; font-weight: 700; color: #111; }
.tree .all svg { color: #fff; }
.t-vbar { width: 14px; padding: 24px 0 0 6px; }
.t-vbar span { display: block; width: 2px; height: 266px; background: #888; }
.t-hbar { flex: none; height: 12px; padding: 5px 0 0 14px; background: #f0f0f0; }
.t-hbar span { display: block; width: 213px; height: 2px; background: #888; }
.finder { display: flex; align-items: center; flex: none; height: 44px; padding: 0 4px 10px; gap: 4px; font-size: 8px; }
.finder label { margin: 0 4px 0 1px; }
.finder input { width: 103px; height: 18px; background: #fff; border-bottom: 1px solid #aaa; }
.sq { width: 15px; height: 18px; background: #fff; border: 1px solid #e0e0e6; display: grid; place-items: center; color: #444; }
.grip { position: absolute; right: 1px; bottom: 1px; }

/* task bar */
.taskbar { display: flex; align-items: center; flex: none; height: 37px; padding: 0 15px 0 16px; background: #1c1c1c; color: #eee; font-size: 9px; }
.start { display: flex; margin-right: 17px; }
.start.views { margin-right: 9px; }
.task { position: relative; display: flex; align-items: center; gap: 7px; height: 32px; padding: 0 7px; margin-right: 3px; border-radius: 3px; }
.task::after { content: ""; position: absolute; left: 13px; bottom: 1px; width: 5px; height: 2px; border-radius: 1px; background: #999; }
.task.active { background: #2c2c2a; padding: 0 6px; }
.task.active::after { left: 9px; width: 12px; background: #4cc2ff; }
.task.last { gap: 10px; }
.task.last::after { left: 10px; }
.tray { display: flex; align-items: center; margin-left: auto; text-align: center; }
.tray > svg { width: 25px; }
.tray .kbd { width: 36px; }
.tray .sound { width: 12px; }
.tray time { margin-left: 14px; text-align: right; }
```
